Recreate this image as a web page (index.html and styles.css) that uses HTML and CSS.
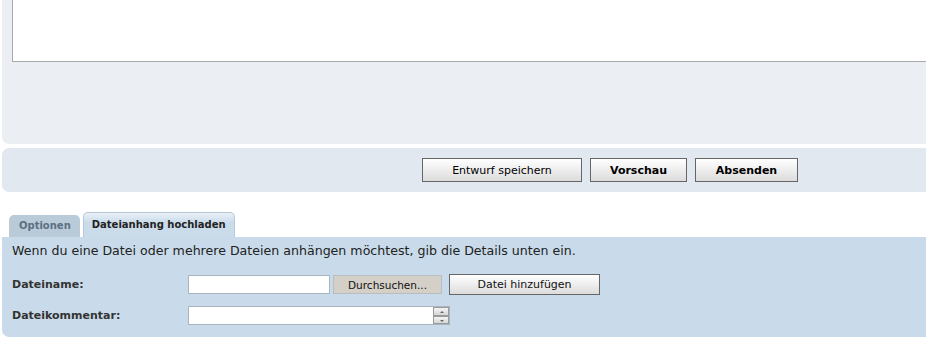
FILE: index.html
```html
<!DOCTYPE html>
<html lang="de">
<head>
  <meta charset="UTF-8" />
  <title>Beitrag schreiben</title>
  <link rel="stylesheet" href="styles.css">
</head>
<body>
  <div class="editor-panel">
    <textarea class="message" aria-label="Nachricht"></textarea>
  </div>

  <div class="submit-panel">
    <button class="btn">Entwurf speichern</button>
    <button class="btn bold">Vorschau</button>
    <button class="btn bold">Absenden</button>
  </div>

  <div class="tabs">
    <div class="tab">Optionen</div>
    <div class="tab active">Dateianhang hochladen</div>
  </div>

  <div class="attach-panel">
    <p class="hint">Wenn du eine Datei oder mehrere Dateien anhängen möchtest, gib die Details unten ein.</p>

    <div class="row">
      <label class="label">Dateiname:</label>
      <div class="field">
        <input type="text" class="file-name">
        <button class="browse">Durchsuchen...</button>
        <button class="btn add">Datei hinzufügen</button>
      </div>
    </div>

    <div class="row">
      <label class="label">Dateikommentar:</label>
      <div class="field">
        <div class="comment">
          <div class="comment-box"></div>
          <div class="spin">
            <span class="arrow up"></span>
            <span class="arrow down"></span>
          </div>
        </div>
      </div>
    </div>
  </div>
</body>
</html>
```

FILE: styles.css
```css
body {
  margin: 0;
  padding: 0 0 0 2px;
  font-family: "DejaVu Sans", Verdana, sans-serif;
  font-size: 11px;
  color: #333;
  background: #fff;
  overflow: hidden;
}

.editor-panel {
  background: #ebeff3;
  border-radius: 0 0 0 7px;
  height: 144px;
  padding-left: 10px;
  margin-right: -20px;
}

.message {
  display: block;
  box-sizing: border-box;
  width: 100%;
  height: 62px;
  margin: 0;
  border: 1px solid #aaa;
  border-top: none;
  background: #fff;
  resize: none;
}

.submit-panel {
  margin-top: 4px;
  background: #e1e8f0;
  border-radius: 7px 0 0 7px;
  height: 44px;
  display: flex;
  align-items: center;
  padding-left: 420px;
  gap: 8px;
}

.btn {
  font-family: "DejaVu Sans", Verdana, sans-serif;
  font-size: 11px;
  color: #000;
  height: 24px;
  padding: 0;
  border: 1px solid #666;
  background: linear-gradient(#ffffff, #dcdcdc);
  cursor: pointer;
}

.submit-panel .btn:first-child { width: 160px; }
.submit-panel .btn:nth-child(2) { width: 97px; }
.submit-panel .btn:nth-child(3) { width: 103px; }

.btn.bold { font-weight: bold; }

.tabs {
  display: flex;
  gap: 3px;
  margin-top: 21px;
  padding-left: 7px;
  align-items: flex-end;
  height: 24px;
}

.tab {
  font-size: 10px;
  font-weight: bold;
  color: #5b6f82;
  background: #b9cbd9;
  border-radius: 5px 5px 0 0;
  height: 22px;
  line-height: 22px;
  padding: 0 9px 0 10px;
}

.tab.active {
  color: #222;
  background: linear-gradient(#eaf1f7, #cadbea 40%);
  border: 1px solid #b5c7d8;
  border-bottom: none;
  height: 24px;
  line-height: 24px;
  padding: 0 8px;
}

.attach-panel {
  background: #c9dbea;
  border-radius: 0 0 0 7px;
  height: 100px;
  padding: 6px 10px 0;
  box-sizing: border-box;
}

.hint {
  margin: 0 0 16px;
  font-size: 12.6px;
  color: #222;
}

.row {
  display: flex;
  align-items: center;
  margin-bottom: 11px;
}

.label {
  width: 176px;
  font-weight: bold;
  color: #333;
}

.field {
  display: flex;
  align-items: center;
}

.file-name {
  box-sizing: border-box;
  width: 142px;
  height: 19px;
  margin: 0;
  border: 1px solid #abb5c0;
  background: #fff;
}

.browse {
  width: 109px;
  height: 19px;
  margin-left: 3px;
  padding: 0;
  font-family: "DejaVu Sans", Tahoma, sans-serif;
  font-size: 10.5px;
  color: #111;
  background: #d4d0c8;
  border: 1px solid #b9bdc2;
}

.btn.add {
  width: 151px;
  height: 21px;
  margin-left: 7px;
  color: #111;
}

.comment {
  display: flex;
  align-items: stretch;
  height: 19px;
}

.comment-box {
  box-sizing: border-box;
  width: 245px;
  border: 1px solid #abb5c0;
  border-right: none;
  background: #fff;
}

.spin {
  width: 17px;
  display: flex;
  flex-direction: column;
  background: #fff;
  border: 1px solid #abb5c0;
  border-left: none;
  box-sizing: border-box;
}

.arrow {
  flex: 1;
  background: linear-gradient(#f4f4f4, #d6d6d6);
  border: 1px solid #9a9a9a;
  position: relative;
}

.arrow::after {
  content: "";
  position: absolute;
  left: 6px;
  top: 3px;
  border-left: 2px solid transparent;
  border-right: 2px solid transparent;
}

.arrow.up::after { border-bottom: 2px solid #666; }
.arrow.down::after { border-top: 2px solid #666; }
```
